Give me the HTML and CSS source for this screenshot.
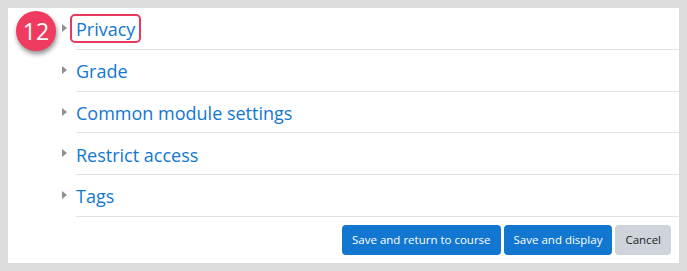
FILE: index.html
```html
<!DOCTYPE html>
<html lang="en">
<head>
  <meta charset="UTF-8">
  <title>Activity settings</title>
  <link rel="stylesheet" href="styles.css">
</head>
<body>

  <div class="panel">

    <!-- Collapsed sections -->
    <div class="section">
      <span class="caret"></span>
      <span class="section-title highlight">Privacy</span>
    </div>
    <div class="section">
      <span class="caret"></span>
      <span class="section-title">Grade</span>
    </div>
    <div class="section">
      <span class="caret"></span>
      <span class="section-title">Common module settings</span>
    </div>
    <div class="section">
      <span class="caret"></span>
      <span class="section-title">Restrict access</span>
    </div>
    <div class="section">
      <span class="caret"></span>
      <span class="section-title">Tags</span>
    </div>

    <!-- Form buttons -->
    <div class="actions">
      <button class="btn btn-primary">Save and return to course</button>
      <button class="btn btn-primary">Save and display</button>
      <button class="btn btn-secondary">Cancel</button>
    </div>

    <div class="step-badge">12</div>
  </div>

</body>
</html>
```

FILE: styles.css
```css
body {
  margin: 0;
  padding: 8px;
  background-color: #dcdcdc;
  font-family: "Open Sans", "Noto Sans", sans-serif;
}

.panel {
  position: relative;
  background-color: #fff;
  height: 255px;
  box-sizing: border-box;
  padding-right: 8px;
}

.section {
  display: flex;
  align-items: center;
  height: 40.75px;
  margin-left: 68px;
  margin-right: -8px;
  border-bottom: 1px solid #dee2e6;
  position: relative;
}

.caret {
  position: absolute;
  left: -14px;
  top: 16px;
  width: 0;
  height: 0;
  border-top: 4.5px solid transparent;
  border-bottom: 4.5px solid transparent;
  border-left: 5px solid #8f8f8f;
}

.section-title {
  font-size: 18px;
  color: #1177d1;
  line-height: 24px;
  padding-top: 2px;
}

.highlight {
  margin-left: -6px;
  margin-top: 1px;
  padding: 1px 4px 0 4px;
  border: 2px solid #e83a5d;
  border-radius: 5px;
}

.actions {
  display: flex;
  justify-content: flex-end;
  gap: 3px;
  margin-top: 8px;
}

.btn {
  font-family: "Open Sans", "Noto Sans", sans-serif;
  font-size: 11.5px;
  height: 30px;
  padding: 0 10px;
  border: none;
  border-radius: 4px;
  cursor: pointer;
}

.btn-primary {
  background-color: #1177d1;
  color: #fff;
}

.btn-secondary {
  background-color: #ced4da;
  color: #1d2125;
}

/* Step marker over the first section */
.step-badge {
  position: absolute;
  left: 8px;
  top: 3px;
  width: 40px;
  height: 40px;
  border-radius: 50%;
  background-color: #ef3b5f;
  color: #fff;
  font-size: 23px;
  display: flex;
  align-items: center;
  justify-content: center;
  box-shadow: 1px 3px 5px rgba(0, 0, 0, 0.45);
}
```
